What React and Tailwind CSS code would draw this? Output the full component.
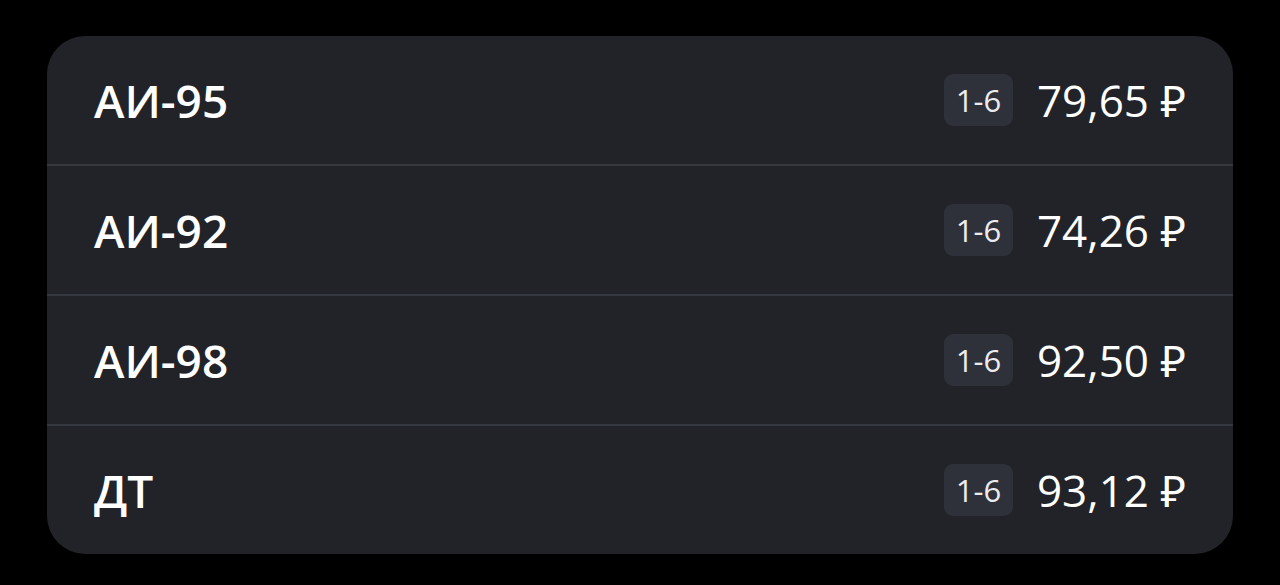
import React from 'react';

const fuels = [
  { name: 'АИ-95', pumps: '1-6', price: '79,65 ₽' },
  { name: 'АИ-92', pumps: '1-6', price: '74,26 ₽' },
  { name: 'АИ-98', pumps: '1-6', price: '92,50 ₽' },
  { name: 'ДТ', pumps: '1-6', price: '93,12 ₽' },
];

const App = () => {
  return (
    <div
      className="w-[1280px] h-[585px] bg-black pt-[36px] pl-[47px] pr-[47px] overflow-hidden"
      style={{ fontFamily: '"Open Sans", "Noto Sans", sans-serif' }}
    >
      <div className="bg-[#212329] rounded-[38px] overflow-hidden flex flex-col">
        {fuels.map((fuel, i) => (
          <div key={fuel.name} className="flex flex-col">
            {i > 0 && <div className="h-[2px] bg-[#363840]" />}
            <div className="h-[128px] flex items-center justify-between px-[47px]">
              {/* fuel name */}
              <span className="text-white text-[46px] font-semibold leading-none">
                {fuel.name}
              </span>

              {/* pumps badge + price */}
              <div className="flex items-center gap-[24px]">
                <div className="w-[69px] h-[52px] rounded-[9px] bg-[#2f313a] flex items-center justify-center">
                  <span className="text-[#ececef] text-[31px] leading-none">{fuel.pumps}</span>
                </div>
                <span className="text-white text-[44px] leading-none">{fuel.price}</span>
              </div>
            </div>
          </div>
        ))}
      </div>
    </div>
  );
};

export default App;
